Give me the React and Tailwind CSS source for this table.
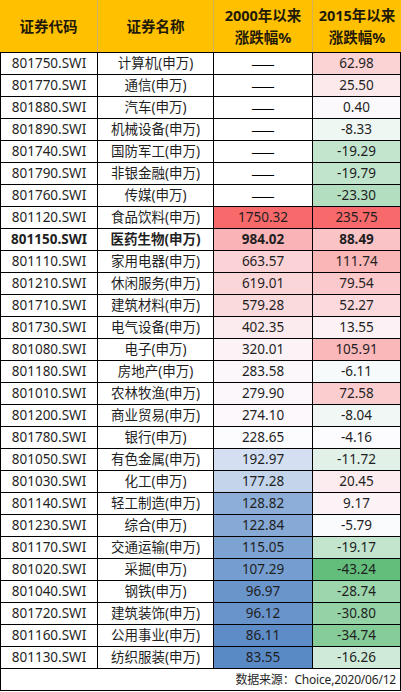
const rows = [
  ['801750.SWI', '计算机(申万)', null, 62.98],
  ['801770.SWI', '通信(申万)', null, 25.5],
  ['801880.SWI', '汽车(申万)', null, 0.4],
  ['801890.SWI', '机械设备(申万)', null, -8.33],
  ['801740.SWI', '国防军工(申万)', null, -19.29],
  ['801790.SWI', '非银金融(申万)', null, -19.79],
  ['801760.SWI', '传媒(申万)', null, -23.3],
  ['801120.SWI', '食品饮料(申万)', 1750.32, 235.75],
  ['801150.SWI', '医药生物(申万)', 984.02, 88.49, true],
  ['801110.SWI', '家用电器(申万)', 663.57, 111.74],
  ['801210.SWI', '休闲服务(申万)', 619.01, 79.54],
  ['801710.SWI', '建筑材料(申万)', 579.28, 52.27],
  ['801730.SWI', '电气设备(申万)', 402.35, 13.55],
  ['801080.SWI', '电子(申万)', 320.01, 105.91],
  ['801180.SWI', '房地产(申万)', 283.58, -6.11],
  ['801010.SWI', '农林牧渔(申万)', 279.9, 72.58],
  ['801200.SWI', '商业贸易(申万)', 274.1, -8.04],
  ['801780.SWI', '银行(申万)', 228.65, -4.16],
  ['801050.SWI', '有色金属(申万)', 192.97, -11.72],
  ['801030.SWI', '化工(申万)', 177.28, 20.45],
  ['801140.SWI', '轻工制造(申万)', 128.82, 9.17],
  ['801230.SWI', '综合(申万)', 122.84, -5.79],
  ['801170.SWI', '交通运输(申万)', 115.05, -19.17],
  ['801020.SWI', '采掘(申万)', 107.29, -43.24],
  ['801040.SWI', '钢铁(申万)', 96.97, -28.74],
  ['801720.SWI', '建筑装饰(申万)', 96.12, -30.8],
  ['801160.SWI', '公用事业(申万)', 86.11, -34.74],
  ['801130.SWI', '纺织服装(申万)', 83.55, -16.26],
]

const WHITE = [252, 252, 255]
const RED = [248, 105, 107]
const BLUE = [90, 138, 198]
const GREEN = [99, 190, 123]

function mix(a, b, t) {
  return `rgb(${a.map((v, i) => Math.round(v + (b[i] - v) * t)).join(',')})`
}

function median(vals) {
  const s = [...vals].sort((a, b) => a - b)
  const m = s.length / 2
  return s.length % 2 ? s[Math.floor(m)] : (s[m - 1] + s[m]) / 2
}

// excel-style 3 colour scale: min / 50th percentile / max
function scale(vals, low) {
  const min = Math.min(...vals)
  const max = Math.max(...vals)
  const mid = median(vals)
  return v => {
    if (v >= mid) return mix(WHITE, RED, (v - mid) / (max - mid))
    return mix(WHITE, low, (mid - v) / (mid - min))
  }
}

const c3 = scale(rows.filter(r => r[2] !== null).map(r => r[2]), BLUE)
const c4 = scale(rows.map(r => r[3]), GREEN)

const fmt = v => v.toFixed(2)

export default function App() {
  return (
    <div className="w-[401px] h-[692px] bg-white text-[#1f1f1f] text-[13.5px]" style={{ fontFamily: '"Noto Sans", "Noto Sans CJK SC", sans-serif' }}>
      <div className="flex h-[53px] bg-[#FFC000] border-b border-black font-bold text-[14.5px] leading-[22px] text-[#1f1a08]">
        <div className="w-[98px] flex items-center justify-center border-r border-[#d4b05c]">证券代码</div>
        <div className="w-[116px] flex items-center justify-center border-r border-[#d4b05c]">证券名称</div>
        <div className="w-[99px] flex flex-col items-center justify-center border-r border-[#d4b05c]">
          <span>2000年以来</span>
          <span>涨跌幅%</span>
        </div>
        <div className="w-[88px] flex flex-col items-center justify-center">
          <span>2015年以来</span>
          <span>涨跌幅%</span>
        </div>
      </div>
      <div className="border-l border-black">
        {rows.map(([code, name, v3, v4, bold]) => (
          <div key={code} className={`flex h-[22px] border-b border-black ${bold ? 'font-bold' : ''}`}>
            <div className="w-[97px] flex items-center justify-center border-r border-black">{code}</div>
            <div className="w-[116px] flex items-center justify-center border-r border-black">{name}</div>
            <div className="w-[99px] flex items-center justify-center border-r border-black" style={{ background: v3 === null ? '#fff' : c3(v3) }}>
              {v3 === null ? <span className="font-['Noto_Sans_CJK_SC'] text-[14px] text-black">——</span> : fmt(v3)}
            </div>
            <div className="w-[88px] flex items-center justify-center border-r border-black" style={{ background: c4(v4) }}>
              {fmt(v4)}
            </div>
          </div>
        ))}
        <div className="flex h-[22px] items-center justify-end pr-[4px] border-b border-r border-black text-[12px] tracking-[-0.2px]">
          数据来源：Choice,2020/06/12
        </div>
      </div>
    </div>
  )
}
